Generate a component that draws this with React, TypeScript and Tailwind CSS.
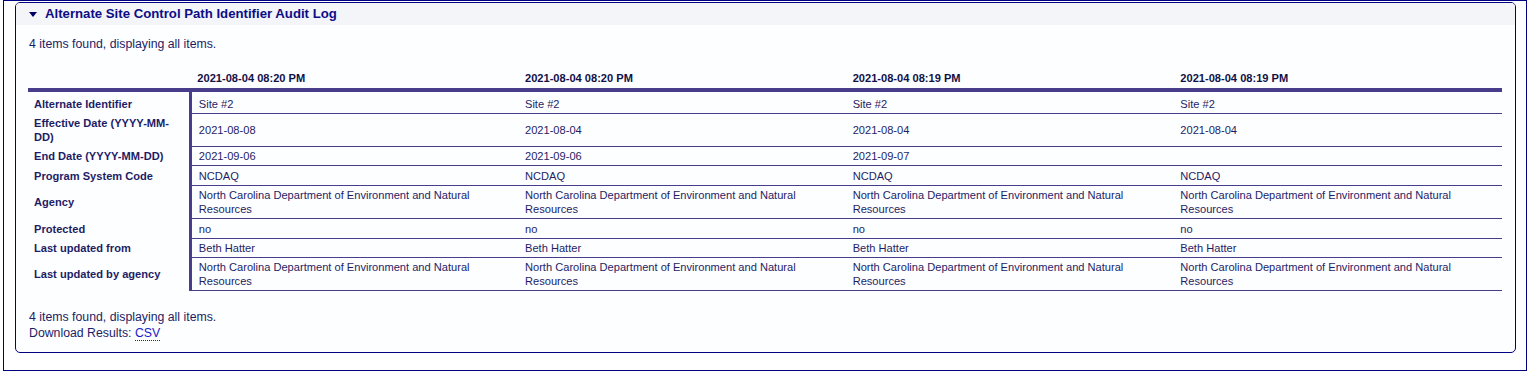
const columns = [
  {
    updated: '2021-08-04 08:20 PM',
    altId: 'Site #2',
    effective: '2021-08-08',
    end: '2021-09-06',
    program: 'NCDAQ',
    agency: 'North Carolina Department of Environment and Natural Resources',
    protectedFlag: 'no',
    from: 'Beth Hatter',
    byAgency: 'North Carolina Department of Environment and Natural Resources',
  },
  {
    updated: '2021-08-04 08:20 PM',
    altId: 'Site #2',
    effective: '2021-08-04',
    end: '2021-09-06',
    program: 'NCDAQ',
    agency: 'North Carolina Department of Environment and Natural Resources',
    protectedFlag: 'no',
    from: 'Beth Hatter',
    byAgency: 'North Carolina Department of Environment and Natural Resources',
  },
  {
    updated: '2021-08-04 08:19 PM',
    altId: 'Site #2',
    effective: '2021-08-04',
    end: '2021-09-07',
    program: 'NCDAQ',
    agency: 'North Carolina Department of Environment and Natural Resources',
    protectedFlag: 'no',
    from: 'Beth Hatter',
    byAgency: 'North Carolina Department of Environment and Natural Resources',
  },
  {
    updated: '2021-08-04 08:19 PM',
    altId: 'Site #2',
    effective: '2021-08-04',
    end: '',
    program: 'NCDAQ',
    agency: 'North Carolina Department of Environment and Natural Resources',
    protectedFlag: 'no',
    from: 'Beth Hatter',
    byAgency: 'North Carolina Department of Environment and Natural Resources',
  },
]

type Col = (typeof columns)[number]

// pad = vertical padding per row, tuned to the row heights of the original
const rows: { label: string; key: keyof Col; pad: string }[] = [
  { label: 'Alternate Identifier', key: 'altId', pad: 'pt-[5px] pb-[2px]' },
  { label: 'Effective Date (YYYY-MM-DD)', key: 'effective', pad: 'pt-[2px] pb-[3px]' },
  { label: 'End Date (YYYY-MM-DD)', key: 'end', pad: 'pt-[2px] pb-[2px]' },
  { label: 'Program System Code', key: 'program', pad: 'pt-[3px] pb-[2px]' },
  { label: 'Agency', key: 'agency', pad: 'pt-[2px] pb-[2px]' },
  { label: 'Protected', key: 'protectedFlag', pad: 'pt-[3px] pb-[2px]' },
  { label: 'Last updated from', key: 'from', pad: 'pt-[2px] pb-[2px]' },
  { label: 'Last updated by agency', key: 'byAgency', pad: 'pt-[2px] pb-[2px]' },
]

export default function App() {
  return (
    <div className="bg-white h-[382px] font-['Liberation_Sans',Arial,sans-serif] text-[#1d1d66]">
      <div className="ml-[3px] w-[1524px] h-[371px] border border-[#000080] pl-[11px] pr-[10px] pt-[1px]">
        {/* audit log panel */}
        <div className="h-[351px] rounded-[5px] border border-[#000080] bg-[#fdfeff] overflow-hidden">
          <div className="h-[22px] bg-[#f3f5f8] flex items-center pl-[13px] gap-[8px]">
            <svg width="8" height="5" viewBox="0 0 8 5" className="mt-[1px]">
              <polygon points="0,0 8,0 4,5" fill="#000066" />
            </svg>
            <span className="text-[13.2px] font-bold text-[#0d0d86] leading-[16px]">
              Alternate Site Control Path Identifier Audit Log
            </span>
          </div>

          <div className="px-[12px]">
            <div className="pl-px mt-[11px] text-[12.3px] leading-[16px]">4 items found, displaying all items.</div>

            <table className="mt-[16px] w-[1474px] table-fixed border-collapse text-[11.1px] leading-[14px]">
              <colgroup>
                <col className="w-[162px]" />
                <col className="w-[327px]" />
                <col className="w-[327px]" />
                <col className="w-[327px]" />
                <col className="w-[328px]" />
              </colgroup>
              <thead>
                <tr className="border-b-4 border-[#483d8b]">
                  <th />
                  {columns.map((c, i) => (
                    <th key={i} className="text-left font-bold pl-[7px] pt-[3px] pb-[3px] text-[#111148]">
                      {c.updated}
                    </th>
                  ))}
                </tr>
              </thead>
              <tbody>
                {rows.map((r) => (
                  <tr key={r.key}>
                    <th
                      className={`text-left font-bold align-middle pl-[6px] pr-[4px] border-r-[3px] border-[#483d8b] ${r.pad}`}
                    >
                      {r.label}
                    </th>
                    {columns.map((c, ci) => (
                      <td
                        key={ci}
                        className={`align-middle pl-[7px] pr-[8px] border-b border-[#483d8b] ${r.pad}`}
                      >
                        {c[r.key]}
                      </td>
                    ))}
                  </tr>
                ))}
              </tbody>
            </table>

            <div className="pl-px mt-[18px] text-[12.3px] leading-[16px]">
              <div>4 items found, displaying all items.</div>
              <div>
                Download Results:{' '}
                <a className="text-[#1a1acc] border-b border-dotted border-[#1a1acc]">CSV</a>
              </div>
            </div>
          </div>
        </div>
      </div>
    </div>
  )
}
